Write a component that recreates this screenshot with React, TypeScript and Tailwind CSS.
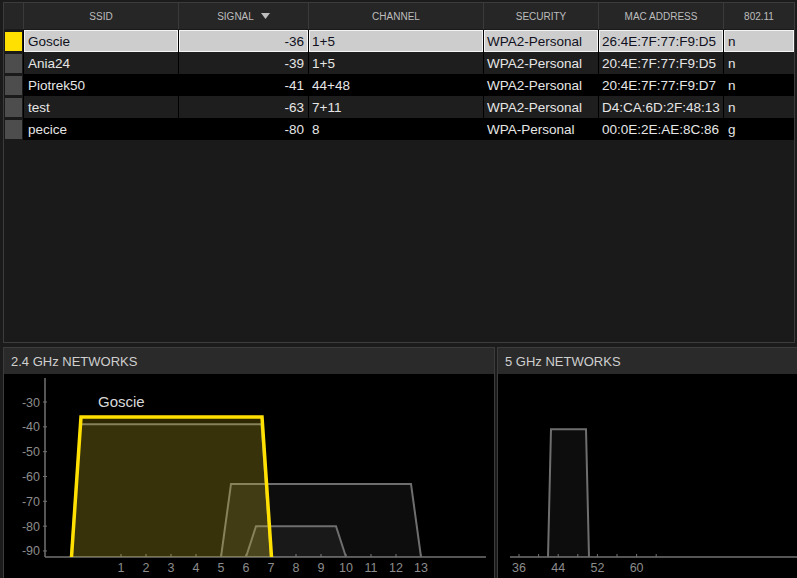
import React from "react";

type Net = {
  ssid: string;
  signal: number;
  channel: string;
  security: string;
  mac: string;
  std: string;
};

const networks: Net[] = [
  { ssid: "Goscie", signal: -36, channel: "1+5", security: "WPA2-Personal", mac: "26:4E:7F:77:F9:D5", std: "n" },
  { ssid: "Ania24", signal: -39, channel: "1+5", security: "WPA2-Personal", mac: "20:4E:7F:77:F9:D5", std: "n" },
  { ssid: "Piotrek50", signal: -41, channel: "44+48", security: "WPA2-Personal", mac: "20:4E:7F:77:F9:D7", std: "n" },
  { ssid: "test", signal: -63, channel: "7+11", security: "WPA2-Personal", mac: "D4:CA:6D:2F:48:13", std: "n" },
  { ssid: "pecice", signal: -80, channel: "8", security: "WPA-Personal", mac: "00:0E:2E:AE:8C:86", std: "g" },
];

const font = { fontFamily: '"Liberation Sans", Arial, sans-serif' };

// signal (dBm) -> y in page coords
const sy = (db: number) => 402 + (-30 - db) * 2.483;

function Trap({ x0, x1, db, inset, stroke, fill, width = 2 }: { x0: number; x1: number; db: number; inset: number; stroke: string; fill: string; width?: number }) {
  const y = sy(db);
  const pts = `${x0},557 ${x0 + inset},${y} ${x1 - inset},${y} ${x1},557`;
  return (
    <g>
      <polygon points={pts} fill={fill} />
      <polyline points={pts} fill="none" stroke={stroke} strokeWidth={width} strokeLinejoin="miter" />
    </g>
  );
}

function Chart24() {
  const cx = (ch: number) => 96 + 25 * ch;
  return (
    <svg width="490" height="204" className="block">
      <g transform="translate(-4,-374)" style={font}>
        <line x1="45" y1="378" x2="45" y2="557" stroke="#727272" strokeWidth="1.5" />
        <line x1="45" y1="557" x2="486" y2="557" stroke="#727272" strokeWidth="1.5" />
        {[-30, -40, -50, -60, -70, -80, -90].map((d) => (
          <g key={d}>
            <line x1="43" y1={sy(d)} x2="47" y2={sy(d)} stroke="#727272" />
            <text x="40" y={sy(d) + 4.5} textAnchor="end" fontSize="12.5" fill="#8c8c8c">
              {d}
            </text>
          </g>
        ))}
        {Array.from({ length: 13 }, (_, i) => i + 1).map((c) => (
          <g key={c}>
            <line x1={cx(c)} y1="554" x2={cx(c)} y2="557" stroke="#727272" />
            <text x={cx(c)} y="572" textAnchor="middle" fontSize="12.5" fill="#8c8c8c">
              {c}
            </text>
          </g>
        ))}
        <Trap x0={cx(-1)} x1={cx(7)} db={-39} inset={9.5} stroke="#6e6e6e" fill="rgba(255,255,255,0.05)" />
        <Trap x0={cx(5)} x1={cx(13)} db={-63} inset={10} stroke="#6e6e6e" fill="rgba(255,255,255,0.05)" />
        <Trap x0={cx(6)} x1={cx(10)} db={-80} inset={10} stroke="#6e6e6e" fill="rgba(255,255,255,0.05)" />
        <Trap x0={cx(-1) + 0.5} x1={cx(7) + 0.5} db={-36} inset={9.5} stroke="#ffe000" fill="rgba(255,220,0,0.18)" width={3.5} />
        <text x="98" y="407" fontSize="15" fill="#d8d8d8">
          Goscie
        </text>
      </g>
    </svg>
  );
}

function Chart5() {
  const cx = (ch: number) => 519 + (ch - 36) * 4.9;
  return (
    <svg width="299" height="204" className="block">
      <g transform="translate(-498,-374)" style={font}>
        <line x1="510" y1="557" x2="797" y2="557" stroke="#727272" strokeWidth="1.5" />
        {[36, 40, 44, 48, 52, 56, 60, 64].map((c) => (
          <line key={c} x1={cx(c)} y1="554" x2={cx(c)} y2="557" stroke="#727272" />
        ))}
        {[36, 44, 52, 60].map((c) => (
          <text key={c} x={cx(c)} y="572" textAnchor="middle" fontSize="12.5" fill="#8c8c8c">
            {c}
          </text>
        ))}
        <Trap x0={548} x1={589} db={-41} inset={3} stroke="#6e6e6e" fill="rgba(255,255,255,0.05)" />
      </g>
    </svg>
  );
}

const cols = "grid grid-cols-[20px_155px_130px_175px_115px_125px_70px]";

function Header() {
  const names = ["SSID", "SIGNAL", "CHANNEL", "SECURITY", "MAC ADDRESS", "802.11"];
  return (
    <div className={`${cols} h-[27px] bg-[#262626] border-b border-[#1a1a1a]`}>
      <div className="border-r border-[#3a3a3a]" />
      {names.map((n, i) => (
        <div
          key={n}
          className={`flex items-center justify-center gap-[7px] text-[10px] text-[#bdbdbd] ${i < 5 ? "border-r border-[#3a3a3a]" : ""}`}
        >
          {n}
          {n === "SIGNAL" && (
            <svg width="9" height="6" viewBox="0 0 9 6">
              <path d="M0 0 L9 0 L4.5 6 Z" fill="#bdbdbd" />
            </svg>
          )}
        </div>
      ))}
    </div>
  );
}

function Row({ n, i }: { n: Net; i: number }) {
  const sel = i === 0;
  const bg = sel ? "bg-[#cdcdcd]" : i % 2 === 1 ? "bg-[#1e1e1e]" : "bg-black";
  const cell = sel
    ? "bg-[#cdcdcd] text-[#101020] shadow-[inset_0_0_0_1px_#f4f4f4] border-r border-black"
    : `${bg} text-[#e6e6e6] border-r border-black`;
  return (
    <div className={`${cols} h-[22px] border-b border-black text-[13.5px]`}>
      <div className="flex items-center justify-center bg-[#1a1a1a] border-r border-black">
        <div className={`w-[17px] h-[19px] ${sel ? "bg-[#ffe000]" : "bg-[#4d4d4d]"}`} />
      </div>
      <div className={`${cell} flex items-center pl-[4px] pt-[2px]`}>{n.ssid}</div>
      <div className={`${cell} flex items-center justify-end pr-[4px] pt-[2px]`}>{n.signal}</div>
      <div className={`${cell} flex items-center pl-[3px] pt-[2px]`}>{n.channel}</div>
      <div className={`${cell} flex items-center pl-[3px] pt-[2px]`}>{n.security}</div>
      <div className={`${cell} flex items-center pl-[3px] pt-[2px]`}>{n.mac}</div>
      <div className={`${cell} flex items-center pl-[4px] pt-[2px] border-r-0`}>{n.std}</div>
    </div>
  );
}

function PanelHeader({ title }: { title: string }) {
  return (
    <div className="h-[27px] bg-[#2a2a2a] border-t border-[#3c3c3c] flex items-center pl-[7px] pt-[1px] text-[13px] text-[#cfcfcf]">
      {title}
    </div>
  );
}

export default function App() {
  return (
    <div className="w-[797px] h-[578px] bg-[#1b1b1b] flex flex-col overflow-hidden" style={font}>
      <div className="mt-[2px] ml-[3px] w-[792px] h-[341px] border border-[#3c3c3c] bg-[#1a1a1a]">
        <Header />
        {networks.map((n, i) => (
          <Row key={n.mac} n={n} i={i} />
        ))}
      </div>
      <div className="flex mt-[4px] flex-1 min-h-0">
        <div className="ml-[3px] w-[492px] border-l border-r border-[#3c3c3c] flex flex-col">
          <PanelHeader title="2.4 GHz NETWORKS" />
          <div className="flex-1 bg-black">
            <Chart24 />
          </div>
        </div>
        <div className="ml-[2px] flex-1 border-l border-[#3c3c3c] flex flex-col">
          <PanelHeader title="5 GHz NETWORKS" />
          <div className="flex-1 bg-black">
            <Chart5 />
          </div>
        </div>
      </div>
    </div>
  );
}
